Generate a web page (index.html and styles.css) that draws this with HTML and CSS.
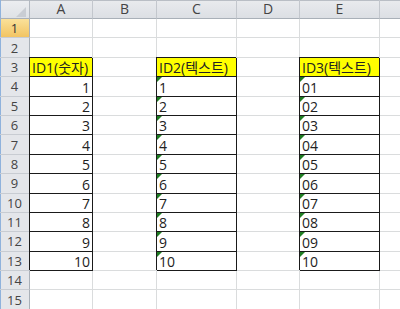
FILE: index.html
```html
<!DOCTYPE html>
<html lang="ko">
<head>
<meta charset="utf-8">
<title>Sheet</title>
<link rel="stylesheet" href="styles.css">
</head>
<body>
<div class="sheet">
  <div class="corner"><svg width="30" height="19" viewBox="0 0 30 19"><polygon points="26,7 26,17 16,17" fill="#c9cdd3"/></svg></div>
  <div class="ch">A</div><div class="ch">B</div><div class="ch">C</div><div class="ch">D</div><div class="ch">E</div><div class="ch last"></div>

  <div class="rh sel">1</div><div class="c"></div><div class="c"></div><div class="c"></div><div class="c"></div><div class="c"></div><div class="c"></div>
  <div class="rh">2</div><div class="c"></div><div class="c"></div><div class="c"></div><div class="c"></div><div class="c"></div><div class="c"></div>
  <div class="rh">3</div><div class="c b y">ID1(숫자)</div><div class="c"></div><div class="c b y">ID2(텍스트)</div><div class="c"></div><div class="c b y">ID3(텍스트)</div><div class="c"></div>
  <div class="rh">4</div><div class="c b num">1</div><div class="c"></div><div class="c b t">1</div><div class="c"></div><div class="c b t">01</div><div class="c"></div>
  <div class="rh">5</div><div class="c b num">2</div><div class="c"></div><div class="c b t">2</div><div class="c"></div><div class="c b t">02</div><div class="c"></div>
  <div class="rh">6</div><div class="c b num">3</div><div class="c"></div><div class="c b t">3</div><div class="c"></div><div class="c b t">03</div><div class="c"></div>
  <div class="rh">7</div><div class="c b num">4</div><div class="c"></div><div class="c b t">4</div><div class="c"></div><div class="c b t">04</div><div class="c"></div>
  <div class="rh">8</div><div class="c b num">5</div><div class="c"></div><div class="c b t">5</div><div class="c"></div><div class="c b t">05</div><div class="c"></div>
  <div class="rh">9</div><div class="c b num">6</div><div class="c"></div><div class="c b t">6</div><div class="c"></div><div class="c b t">06</div><div class="c"></div>
  <div class="rh">10</div><div class="c b num">7</div><div class="c"></div><div class="c b t">7</div><div class="c"></div><div class="c b t">07</div><div class="c"></div>
  <div class="rh">11</div><div class="c b num">8</div><div class="c"></div><div class="c b t">8</div><div class="c"></div><div class="c b t">08</div><div class="c"></div>
  <div class="rh">12</div><div class="c b num">9</div><div class="c"></div><div class="c b t">9</div><div class="c"></div><div class="c b t">09</div><div class="c"></div>
  <div class="rh">13</div><div class="c b num">10</div><div class="c"></div><div class="c b t">10</div><div class="c"></div><div class="c b t">10</div><div class="c"></div>
  <div class="rh">14</div><div class="c"></div><div class="c"></div><div class="c"></div><div class="c"></div><div class="c"></div><div class="c"></div>
  <div class="rh">15</div><div class="c"></div><div class="c"></div><div class="c"></div><div class="c"></div><div class="c"></div><div class="c"></div>
</div>
</body>
</html>
```

FILE: styles.css
```css
html, body {
  margin: 0;
  padding: 0;
  background: #ffffff;
  overflow: hidden;
}

.sheet {
  display: grid;
  grid-template-columns: 30px 63px 64px 80px 63px 80px 40px;
  grid-template-rows: 19px repeat(15, 19.4px);
  font-family: "Open Sans", "Noto Sans CJK KR", sans-serif;
  font-size: 14px;
  color: #222222;
}

.corner {
  box-sizing: border-box;
  background: linear-gradient(#eceef1, #dfe2e6);
  border-right: 1px solid #b3b9c1;
  border-bottom: 1px solid #a9b0b8;
  box-shadow: inset 1px 0 #8fb2dc, inset 0 1px #b9bec5;
}
.corner svg { display: block; }

.ch {
  box-sizing: border-box;
  background: linear-gradient(#e9ebee, #dcdfe4);
  border-right: 1px solid #c3c7cd;
  border-bottom: 1px solid #a9b0b8;
  box-shadow: inset 0 1px #b9bec5;
  display: flex;
  align-items: center;
  justify-content: center;
  color: #444444;
  font-size: 14px;
  line-height: 18px;
}

.rh {
  box-sizing: border-box;
  background: #e4e6ea;
  border-right: 1px solid #a9b0b8;
  border-bottom: 1px solid #c8ccd2;
  box-shadow: inset 1px 0 #8fb2dc;
  display: flex;
  align-items: center;
  justify-content: center;
  color: #444444;
  font-size: 13px;
  line-height: 16px;
}
.rh.sel {
  background: linear-gradient(#fae19a, #f2c462);
  color: #333333;
}

.c {
  box-sizing: border-box;
  position: relative;
  border-right: 1px solid #dadcdd;
  border-bottom: 1px solid #dadcdd;
  display: flex;
  align-items: flex-end;
  padding: 0 2px 0 2px;
  line-height: 17px;
  white-space: nowrap;
}
.b {
  border-color: #1a1a1a;
  box-shadow: -1px -1px 0 #1a1a1a;
}
.y { background: #ffff00; }
.num { justify-content: flex-end; }
.t::before {
  content: "";
  position: absolute;
  left: 0;
  top: 0;
  width: 0;
  height: 0;
  border-top: 5px solid #1e7d22;
  border-right: 5px solid transparent;
}
```
